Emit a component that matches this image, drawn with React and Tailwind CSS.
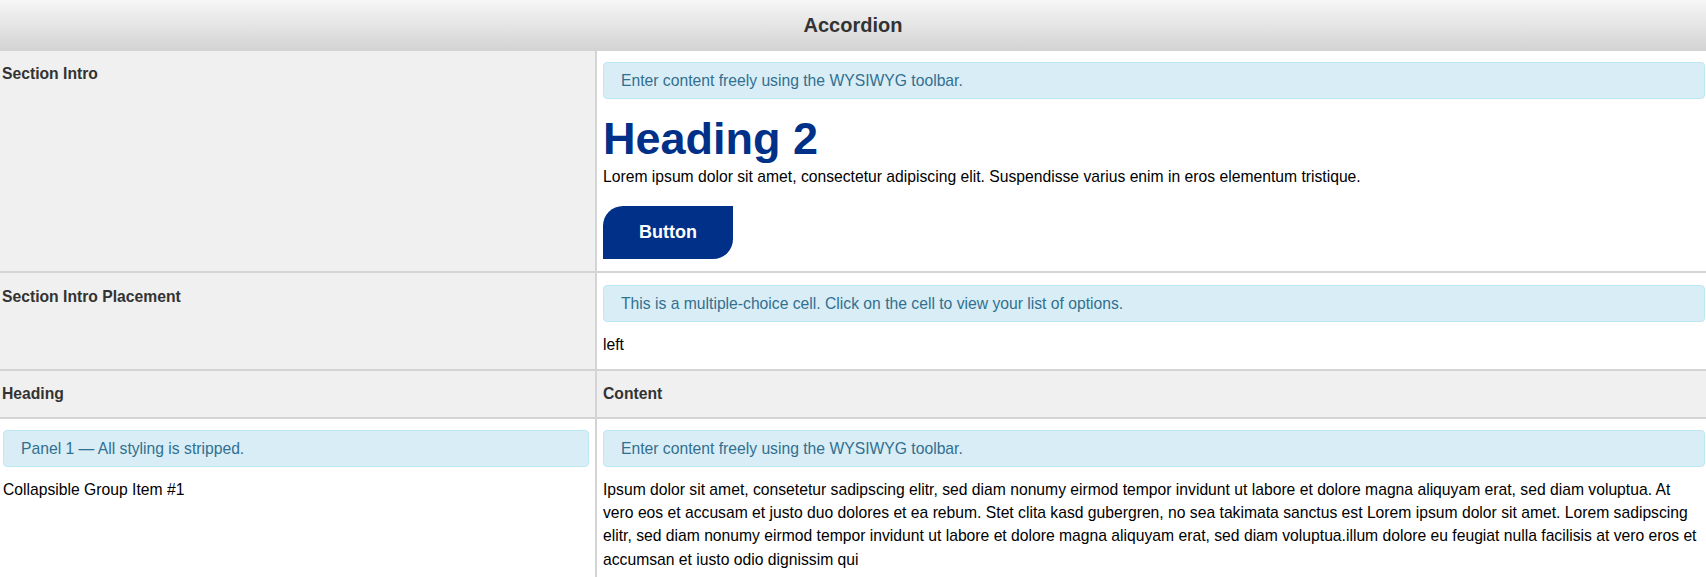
import React from "react";

const font = { fontFamily: '"Liberation Sans", Arial, sans-serif' };

function Info({ children }) {
  return (
    <div className="h-[37px] flex items-center rounded-[4px] border border-[#bce8f1] bg-[#d9edf7] pl-[17px] text-[15.7px] text-[#31708f]">
      {children}
    </div>
  );
}

export default function App() {
  return (
    <div style={font} className="w-full text-[15.7px] leading-[23.3px] text-black bg-white">
      <div className="h-[51px] flex items-center justify-center bg-gradient-to-b from-[#f6f6f6] to-[#d3d3d3]">
        <h1 className="text-[20px] font-bold text-[#333]">Accordion</h1>
      </div>

      {/* Row 1 */}
      <div className="grid grid-cols-[597px_1fr] border-b-2 border-[#d4d4d4]">
        <div className="bg-[#f0f0f0] border-r-2 border-[#d4d4d4] pl-[2px] pr-[6px] pt-[11px] font-bold text-[#333]">
          Section Intro
        </div>
        <div className="pl-[6px] pr-[1px] pt-[11px] pb-[12px]">
          <Info>Enter content freely using the WYSIWYG toolbar.</Info>
          <h2 className="mt-[14px] text-[45px] leading-[52px] font-bold text-[#003087]">Heading 2</h2>
          <p>
            Lorem ipsum dolor sit amet, consectetur adipiscing elit. Suspendisse varius enim in eros elementum tristique.
          </p>
          <button className="mt-[18px] w-[130px] h-[53px] bg-[#003087] text-white text-[18px] font-bold rounded-tl-[20px] rounded-br-[20px] flex items-center justify-center">
            Button
          </button>
        </div>
      </div>

      {/* Row 2 */}
      <div className="grid grid-cols-[597px_1fr] border-b-2 border-[#d4d4d4]">
        <div className="bg-[#f0f0f0] border-r-2 border-[#d4d4d4] pl-[2px] pr-[6px] pt-[12px] font-bold text-[#333]">
          Section Intro Placement
        </div>
        <div className="pl-[6px] pr-[1px] pt-[12px] pb-[12px]">
          <Info>This is a multiple-choice cell. Click on the cell to view your list of options.</Info>
          <p className="mt-[11px]">left</p>
        </div>
      </div>

      {/* Row 3 */}
      <div className="grid grid-cols-[597px_1fr] border-b-2 border-[#d4d4d4] bg-[#f0f0f0]">
        <div className="border-r-2 border-[#d4d4d4] pl-[2px] pr-[6px] pt-[11px] pb-[12px] font-bold text-[#333]">
          Heading
        </div>
        <div className="pl-[6px] pr-[1px] pt-[11px] pb-[12px] font-bold text-[#333]">Content</div>
      </div>

      {/* Row 4 */}
      <div className="grid grid-cols-[597px_1fr]">
        <div className="border-r-2 border-[#d4d4d4] pl-[3px] pr-[6px] pt-[11px] pb-[12px]">
          <Info>Panel 1 — All styling is stripped.</Info>
          <p className="mt-[11px]">Collapsible Group Item #1</p>
        </div>
        <div className="pl-[6px] pr-[1px] pt-[11px] pb-[12px]">
          <Info>Enter content freely using the WYSIWYG toolbar.</Info>
          <p className="mt-[11px]">
            Ipsum dolor sit amet, consetetur sadipscing elitr, sed diam nonumy eirmod tempor invidunt ut labore et dolore magna aliquyam erat, sed diam voluptua. At vero eos et accusam et justo duo dolores et ea rebum. Stet clita kasd gubergren, no sea takimata sanctus est Lorem ipsum dolor sit amet. Lorem sadipscing elitr, sed diam nonumy eirmod tempor invidunt ut labore et dolore magna aliquyam erat, sed diam voluptua.illum dolore eu feugiat nulla facilisis at vero eros et accumsan et iusto odio dignissim qui
          </p>
        </div>
      </div>
    </div>
  );
}
